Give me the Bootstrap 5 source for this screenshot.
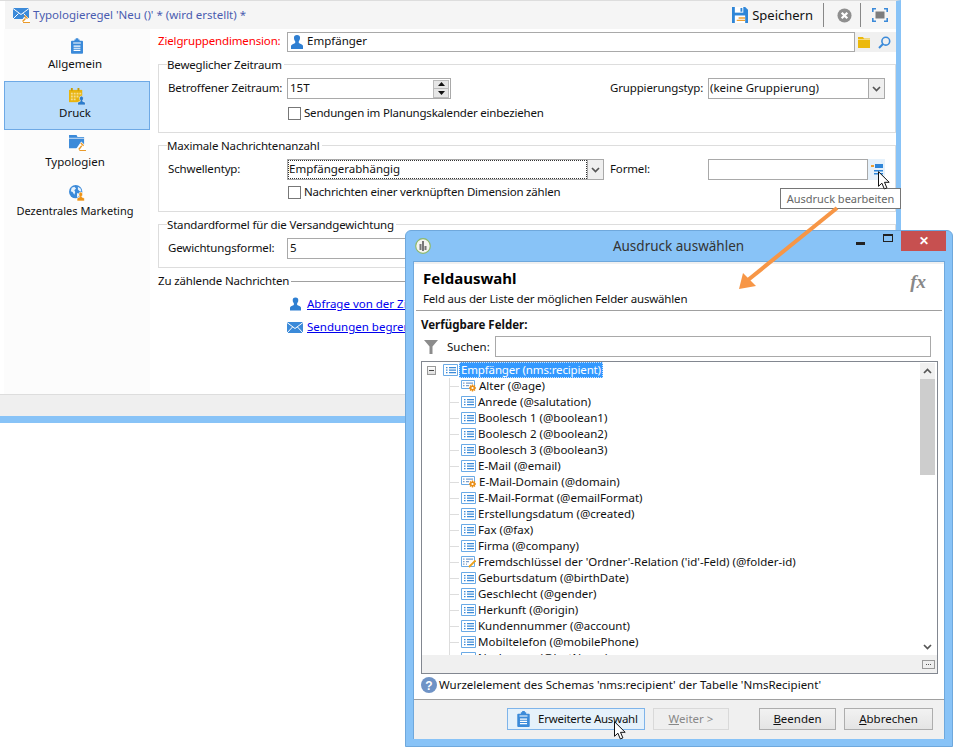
<!DOCTYPE html>
<html lang="de">
<head>
<meta charset="utf-8">
<title>Typologieregel</title>
<link href="https://cdn.jsdelivr.net/npm/bootstrap@5.3.0/dist/css/bootstrap.min.css" rel="stylesheet">
<style>
html,body{margin:0;background:#fff;overflow:hidden}
body{font-family:"Noto Sans","Liberation Sans",sans-serif;font-size:11.5px;line-height:16px;color:#111}
.desk{position:relative;width:969px;height:747px;overflow:hidden}
.win-main{position:absolute;left:0;top:0;width:901px;height:423px;border-top:1px solid #ddd;border-right:5px solid #88c3f7;border-bottom:7px solid #88c3f7;background:#fff}
.tool{height:28px;margin-left:5px;background:#f5f5f5;color:#4a5cb0;font-size:11.5px}
.tool-ttl{margin-left:3px}
.save-txt{color:#111;font-size:13px;margin-left:4px}
.vsep{width:1px;height:24px;background:#888}
.vs1{margin:0 13px 0 10px}
.vs2{margin:0 11px 0 8px}
.wbody{height:365px;margin-left:4px}
.side{width:146px;background:#fcfcfc}
.side-item.nav-link{color:#111;text-align:center;border:1px solid transparent;font-size:11.5px}
.side-item svg{display:block;margin:0 auto}
.side-item span{display:block;margin-right:4px;white-space:nowrap}
.s1.nav-link{height:52px;padding:8px 0 0}
.s1 svg{margin-bottom:2px}
.sel.nav-link{height:49px;padding:6px 0 0;background:#b9dcfb;border-color:#6ea9e5}
.s3.nav-link{height:49px;padding:4px 0 0}
.s3 svg{margin-bottom:3px}
.s4.nav-link{height:50px;padding:5px 0 0}
.s4 svg{margin-bottom:2px}
.s4 span{font-size:11px}
.content{width:746px;padding-left:8px}
.r-top{margin-top:3px;height:20px}
.lbl-red{color:#f00;width:129px;white-space:nowrap;padding-bottom:2px;letter-spacing:-.15px}
.wf-field{border:1px solid #a9a9a9;background:#fff;height:21px}
.wf-input.form-control{border:0;border-radius:0;padding:0 2px 2px;font-size:11.5px;line-height:17px;height:19px;min-height:0;color:#111;background:#fff;box-shadow:none}
.topfield{width:568px;padding-left:3px;height:20px}
.topfield span{padding-bottom:2px}
.tools-end{width:41px;height:20px;background:#f0f0f0;gap:8px;padding-left:3px}
.grp{border:1px solid #ddd;margin:5px 0 0;padding:0 0 12px 9px;width:738px;min-width:0}
.grp legend{float:none;width:auto;font-size:11.5px;line-height:15px;margin:0 0 0 -1px;padding:0 2px 0 0;color:#111;letter-spacing:-.17px}
.grp-row{margin-top:6px}
.glbl,.glbl2{flex:none;white-space:nowrap;padding-bottom:2px;letter-spacing:-.15px}
.glbl{width:119px}
.glbl2{width:98px}
.wf-combo{height:21px;border:1px solid #a9a9a9;background:#fff;padding-left:1px;white-space:nowrap}
.combo-txt{padding-bottom:2px}
.combo-btn{width:16px;height:19px;background:#efefef;border-left:1px solid #a9a9a9;margin-left:auto;flex:none}
.focusy{outline:1px dotted #333;outline-offset:-1px;width:299px;height:19px;padding-left:1px;line-height:17px}
.spin{width:16px;height:18px;margin:0 1px 0 auto;background:#e6e6e6;border:1px solid #bbb;font-size:0;flex:none}
.spin-a{height:8px;border-bottom:1px solid #bbb}
.spin-b{height:8px}
.chk-row{padding-left:119px;height:14px;letter-spacing:-.2px}
.chk-a{margin-top:7px}
.chk-b{margin-top:5px}
.wf-chk.form-check-input{width:13px;height:13px;margin:0 3px 0 1px;border:1px solid #777;border-radius:0;box-shadow:none;flex:none}
.septtl{margin-top:5px;height:16px;white-space:nowrap;letter-spacing:-.15px}
.sepline{height:1px;background:#a0a0a0;flex:1 0 auto;margin-left:2px;margin-right:10px}
.lnk{margin-top:7px;height:16px;padding-left:129px}
.lnk a{color:#00e;margin-left:4px;white-space:nowrap}
.lnk .ic{width:16px;display:flex;justify-content:center}
.status{height:22px;background:#efefef;border-top:1px solid #ddd}
.formel-btn{width:17px;height:21px;background:#e5f1fb}
.tip{position:absolute;left:780px;top:188px;width:121px;height:21px;background:#fff;border:1px solid #767676;color:#666;font-size:11px;line-height:19px;text-align:center;z-index:3}
.dlg{position:absolute;left:405px;top:230px;width:548px;height:517px;background:#88c3f7;border:1px solid #6fa8dc;border-radius:6px 6px 0 0;z-index:2;display:flex;flex-direction:column}
.dlg-title{height:30px;color:#333;font-size:13.5px;flex:none}
.dlg-ttxt{flex:1;text-align:center;padding-left:70px}
.dlg-app{margin-left:9px}
.wbtns{margin-right:6px;height:20px;align-self:flex-start}
.w-min{width:9px;height:3px;background:#222;margin-top:5px;align-self:center}
.w-max{width:10px;height:8px;border:1px solid #222;border-top-width:2px;margin-left:18px;margin-top:-6px}
.w-close.btn-close{width:45px;height:20px;padding:0;margin-left:8px;background:#c75050;opacity:1;border-radius:0;color:#fff;font-size:12px;font-weight:700;display:flex;align-items:center;justify-content:center;--bs-btn-close-bg:none}
.dlg-in{flex:1;margin:0 7px 7px 7px;background:#fff;border:1px solid #6fa8dc;display:flex;flex-direction:column;min-height:0}
.dlg-h{height:48px;border-top:2px solid #f0f0f0;padding:4px 0 0 9px;flex:none}
.dlg-h .t1{font-weight:700;font-size:15px;line-height:20px;color:#000;margin:0}
.dlg-h .t2{line-height:16px;margin-top:3px;letter-spacing:-.18px}
.fx{font-family:"Liberation Serif",serif;font-style:italic;font-weight:700;font-size:19px;color:#888}
.fxw{margin:6px 18px 0 auto}
.rule{height:1px;background:#a0a0a0;margin:0 2px;flex:none}
.avail{font-weight:700;margin:6px 0 0 7px;height:16px;flex:none}
.srch{margin:3px 0 0 10px;height:21px;flex:none}
.srch-l{width:57px;flex:none;padding-left:9px}
.srch-in{width:436px;border-color:#a9a9a9}
.tree{margin:4px 7px 0 7px;width:517px;height:313px;border:1px solid #828790;flex:none;display:flex;flex-direction:column}
.tree-main{height:293px}
.tree-list{flex:1;overflow:hidden;position:relative}
.tree-vl{position:absolute;left:27px;top:16px;bottom:0;width:1px;background:#ddd}
.trow{height:16px;padding-left:56px;position:relative;white-space:nowrap}
.trow::before{content:"";position:absolute;left:27px;top:8px;width:10px;height:1px;background:#ddd}
.trow svg{margin-right:2px;flex:none;margin-left:-17px}
.troot{padding-left:5px}
.troot::before{display:none}
.troot svg{margin:0 1px 0 0}
.exp{width:9px;height:9px;border:1px solid #999;background:linear-gradient(#fff,#ddd);margin-right:7px;position:relative;flex:none}
.exp::after{content:"";position:absolute;left:1px;top:3px;width:5px;height:1px;background:#444}
.tsel{background:#3399ff;color:#fff;outline:1px dotted #cfe6ff;outline-offset:-1px;padding:0 2px;line-height:16px;letter-spacing:-.15px}
.vbar{width:15px;margin-right:2px;margin-top:1px;flex:none;background:#fff}
.vb-btn{height:16px;background:#f0f0f0}
.vb-th{height:96px;background:#cdcdcd}
.vb-tr{flex:1}
.hband{flex:1;background:#f0f0f0}
.grip{width:13px;height:9px;border:1px solid #999;background:#eee;margin-right:2px;font-size:0;gap:1px}
.grip i{width:1px;height:1px;background:#555;display:block}
.hint{margin:2px 0 0 7px;height:18px;flex:none;line-height:18px}
.hint svg{margin-right:2px;flex:none}
.foot{height:40px;border-top:1px solid #a0a0a0;margin-top:5px;background:#f0f0f0;padding:8px 0 0 93px;flex:none;gap:8px}
.xb.btn{height:22px;border-radius:0;font-size:11.5px;line-height:16px;padding:0;border:1px solid #adadad;background:linear-gradient(#f2f2f2,#e4e4e4);color:#111;--bs-btn-disabled-opacity:1}
.xb-1.btn{width:138px;background:#e5f1fb;border-color:#7eb4ea;padding-left:9px;letter-spacing:-.25px}
.xb-2.btn{width:76px;background:#efefef;border-color:#d9d9d9;color:#888}
.xb-3.btn{width:77px;margin-left:22px}
.xb-4.btn{width:89px}
.xb-1 svg{margin-right:8px}
.over{position:absolute;pointer-events:none;z-index:4}
.arrow{left:730px;top:205px}
.cur1{left:878px;top:171px;z-index:5}
.cur2{left:614px;top:721px;z-index:5}
</style>
</head>
<body>
<svg width="0" height="0" class="position-absolute">
<defs>
<symbol id="i-clip" viewBox="0 0 14 18"><path fill="#3b8ad9" d="M1 3h3V1.500h1.500V0h3v1.500H10V3h3q1 0 1 1v13q0 1-1 1H1q-1 0-1-1V4q0-1 1-1z"/><path fill="#fff" d="M2.500 5h9v1.200h-9zM3 8.500h8v1.300H3zM3 11h8v1.300H3zM3 13.500h8v1.300H3z"/></symbol>
<symbol id="i-cal" viewBox="0 0 18 18"><path fill="#e9b40d" d="M0 2h14v13H0z"/><path fill="#c99a05" d="M2 0h2v3H2zM9 0h2v3H9z"/><path fill="#fff" opacity=".55" d="M2 5h2v2H2zM5 5h2v2H5zM8 5h2v2H8zM11 5h2v2h-2zM2 8h2v2H2zM5 8h2v2H5zM8 8h2v2H8zM2 11h2v2H2zM5 11h2v2H5z"/><path fill="#2b7ccd" stroke="#fff" stroke-width=".6" d="M13 8.500a2.300 2.300 0 0 1 2.300 2.600c0 1-.6 1.700-.9 2.200v.7l3 1.300V18H9v-2.700l3-1.300v-.7c-.3-.5-.9-1.200-.9-2.200A2.300 2.300 0 0 1 13 8.500z"/></symbol>
<symbol id="i-fold" viewBox="0 0 18 17"><path fill="#3b8ad9" d="M0 0h8l1 2h7v12H0z"/><path fill="#fff" d="M0 3h16v.8H0z"/><path fill="#fff" d="M8 14l5-7 5 5v5H8z"/><path fill="#ea9a2a" d="M13 8l3 3-1 1-3-3zM13 11l1 1-3 4-1.200-1zM11 16h7v1h-7z"/></symbol>
<symbol id="i-globe" viewBox="0 0 18 18"><circle cx="7.500" cy="7.500" r="7.500" fill="#3b8ad9"/><path fill="#e6f1fb" d="M3 3l3-1 2 2-2 2 1 2-1 3-2-3-2-1zM10 2l3 2 1 3-2 0-2-2zM9 9l3 1-1 3-2 1z"/><path fill="#ee9417" stroke="#fff" stroke-width=".7" d="M13 8a2.300 2.300 0 0 1 2.300 2.600c0 1-.6 1.700-.9 2.200v.7l3 1.300V18H9v-3.200l3-1.300v-.7c-.3-.5-.9-1.200-.9-2.200A2.300 2.300 0 0 1 13 8z"/></symbol>
<symbol id="i-mailh" viewBox="0 0 17 16"><path fill="#3b8ad9" d="M0 1h16v11H0z"/><path fill="none" stroke="#fff" stroke-width="1" d="M0 1.500l8 6 8-6M0 12l5.500-5.500M16 12l-5.500-5.500"/><path fill="#fff" d="M7 16l4-6 6 2v4z"/><path fill="#ea9a2a" d="M12 8l3 3-1 1-3-3zM12 11l1 1-3 3-1-1zM10 15h7v1h-7z"/></symbol>
<symbol id="i-person" viewBox="0 0 12 14"><path fill="#2e7fd2" d="M6 0a3 3 0 0 1 3 3.300c0 1.400-.7 2.300-1.200 3V8l3 1.400q1.200.6 1.200 1.600v3H0v-3q0-1 1.200-1.600L4.200 8V6.300C3.700 5.600 3 4.700 3 3.300A3 3 0 0 1 6 0z"/></symbol>
<symbol id="i-mail" viewBox="0 0 16 11"><path fill="#3b8ad9" d="M0 0h16v11H0z"/><path fill="none" stroke="#fff" stroke-width="1" d="M0 .5l8 6 8-6M0 11l5.500-6M16 11l-5.500-6"/></symbol>
<symbol id="i-save" viewBox="0 0 17 17"><path fill="#2f86d8" d="M0 0h14l3 3v14H0z"/><path fill="#fff" d="M3 0h9v6H3z"/><path fill="#2f86d8" d="M9 1h2v4H9z"/><path fill="#fff" d="M3 9h11v8H3z"/><path fill="#f0a030" d="M7 11h7v1.500H7zM5 13.500h9V15H5z"/></symbol>
<symbol id="i-x" viewBox="0 0 16 16"><circle cx="8" cy="8" r="7.500" fill="#8f8f8f"/><path stroke="#fff" stroke-width="2.400" d="M5 5l6 6M11 5l-6 6"/></symbol>
<symbol id="i-full" viewBox="0 0 16 14"><g fill="none" stroke="#3b8ad9" stroke-width="1.600"><path d="M.8 4V.8H4M12 .8h3.200V4M.8 10v3.200H4M12 13.200h3.200V10"/></g><path fill="#7d7d7d" d="M3.500 3.500h9v7h-9z"/></symbol>
<symbol id="i-yf" viewBox="0 0 12 11"><path fill="#ecb90c" d="M0 0h5l1 1.500h6V11H0z"/><path fill="#fff" d="M0 2.200h12v.5H0z"/></symbol>
<symbol id="i-mag" viewBox="0 0 13 13"><circle cx="7.800" cy="5.200" r="3.900" fill="none" stroke="#3b8ad9" stroke-width="1.600"/><path stroke="#3b8ad9" stroke-width="2" d="M5 8L1 12"/></symbol>
<symbol id="i-fexp" viewBox="0 0 14 13"><path fill="#f0a030" d="M1 2h3v2H1z"/><path fill="#2f86d8" d="M5 1h8v4H5zM4 7h9v1.500H4zM4 10h9v1.500H4z"/></symbol>
<symbol id="i-f" viewBox="0 0 15 12"><path fill="#fff" stroke="#6aaae6" d="M.5.500h14v11H.5z"/><path fill="#3a8ad8" d="M3 3h1.500v1.300H3zM6 3h7v1.300H6zM3 5.500h1.500v1.300H3zM6 5.500h7v1.300H6zM3 8h1.500v1.300H3zM6 8h7v1.300H6z"/></symbol>
<symbol id="i-fg" viewBox="0 0 16 12"><path fill="#fff" stroke="#6aaae6" d="M.5.500h13v8h-13z"/><path fill="#7a9ecb" d="M2 2.500h1.500v1.300H2zM5 2.500h7v1.300H5zM2 5h1.500v1.300H2zM5 5h3v1.300H5z"/><path stroke="#ea8f17" stroke-width="1.400" d="M11.500 4.500v7M8 8h7M9 5.500l5 5M14 5.500l-5 5"/><circle cx="11.500" cy="8" r="2.500" fill="#ea8f17"/><circle cx="11.500" cy="8" r="1.100" fill="#fff"/></symbol>
<symbol id="i-fp" viewBox="0 0 15 12"><path fill="#fff" stroke="#6aaae6" d="M.5.500h13v10h-13z"/><path fill="#7a9ecb" d="M2 2.500h1.500v1.300H2zM5 2.500h7v1.300H5zM2 5h1.500v1.300H2zM5 5h3v1.300H5zM2 7.500h1.500v1.300H2zM5 7.500h1v1.300H5z"/><path stroke="#e9a11f" stroke-width="1.800" d="M14.500 4.500L8 11"/></symbol>
<symbol id="i-q" viewBox="0 0 16 16"><circle cx="8" cy="8" r="8" fill="#6f93c6"/><text x="8" y="12.500" text-anchor="middle" font-family="Liberation Sans" font-size="12" font-weight="700" fill="#fff">?</text></symbol>
<symbol id="i-filter" viewBox="0 0 14 14"><path fill="#8c8c8c" d="M0 0h14L8.500 6.500V14h-3V6.500z"/></symbol>
<symbol id="i-cursor" viewBox="0 0 12 19"><path fill="#fff" stroke="#111" d="M.5.700v14.600l3.400-3.100 2.400 5.700 2.600-1-2.400-5.600h4.700z"/></symbol>
<symbol id="i-app" viewBox="0 0 16 16"><circle cx="8" cy="8" r="7.300" fill="#f4f4f0" stroke="#8db86a" stroke-width="1.200"/><path fill="#777" d="M7 3h2v10H7zM4.500 6h2v6h-2zM9.500 8h2v4h-2z"/></symbol>
</defs>
</svg>

<div class="desk">
  <div class="win-main">
    <div class="tool d-flex align-items-center">
      <svg class="ms-2" width="17" height="16"><use href="#i-mailh"/></svg>
      <span class="tool-ttl">Typologieregel 'Neu ()' * (wird erstellt) *</span>
      <div class="d-flex align-items-center ms-auto">
        <svg width="16" height="16"><use href="#i-save"/></svg>
        <span class="save-txt">Speichern</span>
        <span class="vsep vs1"></span>
        <svg width="15" height="15"><use href="#i-x"/></svg>
        <span class="vsep vs2"></span>
        <svg class="me-2" width="16" height="14"><use href="#i-full"/></svg>
      </div>
    </div>
    <div class="wbody d-flex">
      <nav class="side nav flex-column flex-nowrap">
        <a class="side-item s1 nav-link" href="#"><svg width="12" height="16"><use href="#i-clip"/></svg><span>Allgemein</span></a>
        <a class="side-item sel nav-link" href="#"><svg width="17" height="17"><use href="#i-cal"/></svg><span>Druck</span></a>
        <a class="side-item s3 nav-link" href="#"><svg width="17" height="16"><use href="#i-fold"/></svg><span>Typologien</span></a>
        <a class="side-item s4 nav-link" href="#"><svg width="16" height="16"><use href="#i-globe"/></svg><span>Dezentrales Marketing</span></a>
      </nav>
      <div class="content">
        <div class="r-top d-flex align-items-center">
          <span class="lbl-red">Zielgruppendimension:</span>
          <div class="wf-field topfield d-flex align-items-center">
            <svg width="12" height="14"><use href="#i-person"/></svg>
            <span class="ms-1">Empfänger</span>
          </div>
          <div class="tools-end d-flex align-items-center">
            <svg width="12" height="11"><use href="#i-yf"/></svg>
            <svg width="13" height="13"><use href="#i-mag"/></svg>
          </div>
        </div>

        <fieldset class="grp">
          <legend>Beweglicher Zeitraum</legend>
          <div class="grp-row d-flex align-items-center">
            <span class="glbl">Betroffener Zeitraum:</span>
            <div class="wf-field d-flex align-items-center" style="width:164px">
              <input class="form-control wf-input" value="15T" aria-label="Zeitraum">
              <div class="spin d-flex flex-column">
                <div class="spin-a d-flex align-items-center justify-content-center"><svg width="7" height="4"><path d="M3.500 0L7 4H0z" fill="#111"/></svg></div>
                <div class="spin-b d-flex align-items-center justify-content-center"><svg width="7" height="4"><path d="M3.500 4L7 0H0z" fill="#111"/></svg></div>
              </div>
            </div>
            <span class="glbl2" style="margin-left:159px">Gruppierungstyp:</span>
            <div class="wf-combo d-flex align-items-center" style="width:177px">
              <span class="combo-txt">(keine Gruppierung)</span>
              <span class="combo-btn d-flex align-items-center justify-content-center"><svg width="9" height="6"><path d="M1 1l3.500 3.500L8 1" fill="none" stroke="#555" stroke-width="1.700"/></svg></span>
            </div>
          </div>
          <div class="chk-row chk-a d-flex align-items-center">
            <input class="form-check-input wf-chk" type="checkbox" aria-label="Sendungen">
            <span>Sendungen im Planungskalender einbeziehen</span>
          </div>
        </fieldset>

        <fieldset class="grp">
          <legend>Maximale Nachrichtenanzahl</legend>
          <div class="grp-row d-flex align-items-center">
            <span class="glbl">Schwellentyp:</span>
            <div class="wf-combo d-flex align-items-center p-0" style="width:317px">
              <span class="focusy">Empfängerabhängig</span>
              <span class="combo-btn d-flex align-items-center justify-content-center"><svg width="9" height="6"><path d="M1 1l3.500 3.500L8 1" fill="none" stroke="#555" stroke-width="1.700"/></svg></span>
            </div>
            <span class="glbl2" style="margin-left:6px">Formel:</span>
            <div class="wf-field" style="width:160px"></div>
            <div class="formel-btn d-flex align-items-center justify-content-center"><svg width="14" height="13"><use href="#i-fexp"/></svg></div>
          </div>
          <div class="chk-row chk-b d-flex align-items-center">
            <input class="form-check-input wf-chk" type="checkbox" aria-label="Nachrichten">
            <span>Nachrichten einer verknüpften Dimension zählen</span>
          </div>
        </fieldset>

        <fieldset class="grp pb-2">
          <legend>Standardformel für die Versandgewichtung</legend>
          <div class="grp-row d-flex align-items-center">
            <span class="glbl">Gewichtungsformel:</span>
            <div class="wf-field d-flex align-items-center" style="width:300px">
              <input class="form-control wf-input" value="5" aria-label="Gewichtung">
            </div>
          </div>
        </fieldset>

        <div class="septtl d-flex align-items-center"><span>Zu zählende Nachrichten</span><span class="sepline"></span></div>
        <div class="lnk d-flex align-items-center"><span class="ic"><svg width="11" height="14"><use href="#i-person"/></svg></span><a href="#">Abfrage von der Zielgruppe</a></div>
        <div class="lnk d-flex align-items-center"><span class="ic"><svg width="16" height="11"><use href="#i-mail"/></svg></span><a href="#">Sendungen begrenzen</a></div>
      </div>
    </div>
    <div class="status"></div>
  </div>

  <div class="tip">Ausdruck bearbeiten</div>

  <div class="dlg">
    <div class="dlg-title d-flex align-items-center">
      <svg class="dlg-app" width="16" height="16"><use href="#i-app"/></svg>
      <span class="dlg-ttxt">Ausdruck auswählen</span>
      <div class="wbtns d-flex align-items-center">
        <span class="w-min"></span>
        <span class="w-max"></span>
        <button type="button" class="w-close btn-close" aria-label="Schließen">✕</button>
      </div>
    </div>
    <div class="dlg-in">
      <div class="dlg-h d-flex">
        <div>
          <p class="t1">Feldauswahl</p>
          <p class="t2 mb-0">Feld aus der Liste der möglichen Felder auswählen</p>
        </div>
        <div class="fxw fx">fx</div>
      </div>
      <div class="rule"></div>
      <div class="avail">Verfügbare Felder:</div>
      <div class="srch d-flex align-items-center">
        <svg width="14" height="14"><use href="#i-filter"/></svg>
        <span class="srch-l">Suchen:</span>
        <div class="wf-field srch-in"></div>
      </div>
      <div class="tree">
        <div class="tree-main d-flex flex-grow-0">
          <div class="tree-list">
            <div class="tree-vl"></div>
            <div class="trow troot d-flex align-items-center"><span class="exp"></span><svg width="15" height="12"><use href="#i-f"/></svg><span class="tsel">Empfänger (nms:recipient)</span></div>
            <div class="trow d-flex align-items-center"><svg width="16" height="12"><use href="#i-fg"/></svg>Alter (@age)</div>
            <div class="trow d-flex align-items-center"><svg width="15" height="12"><use href="#i-f"/></svg>Anrede (@salutation)</div>
            <div class="trow d-flex align-items-center"><svg width="15" height="12"><use href="#i-f"/></svg>Boolesch 1 (@boolean1)</div>
            <div class="trow d-flex align-items-center"><svg width="15" height="12"><use href="#i-f"/></svg>Boolesch 2 (@boolean2)</div>
            <div class="trow d-flex align-items-center"><svg width="15" height="12"><use href="#i-f"/></svg>Boolesch 3 (@boolean3)</div>
            <div class="trow d-flex align-items-center"><svg width="15" height="12"><use href="#i-f"/></svg>E-Mail (@email)</div>
            <div class="trow d-flex align-items-center"><svg width="16" height="12"><use href="#i-fg"/></svg>E-Mail-Domain (@domain)</div>
            <div class="trow d-flex align-items-center"><svg width="15" height="12"><use href="#i-f"/></svg>E-Mail-Format (@emailFormat)</div>
            <div class="trow d-flex align-items-center"><svg width="15" height="12"><use href="#i-f"/></svg>Erstellungsdatum (@created)</div>
            <div class="trow d-flex align-items-center"><svg width="15" height="12"><use href="#i-f"/></svg>Fax (@fax)</div>
            <div class="trow d-flex align-items-center"><svg width="15" height="12"><use href="#i-f"/></svg>Firma (@company)</div>
            <div class="trow d-flex align-items-center"><svg width="15" height="12"><use href="#i-fp"/></svg>Fremdschlüssel der 'Ordner'-Relation ('id'-Feld) (@folder-id)</div>
            <div class="trow d-flex align-items-center"><svg width="15" height="12"><use href="#i-f"/></svg>Geburtsdatum (@birthDate)</div>
            <div class="trow d-flex align-items-center"><svg width="15" height="12"><use href="#i-f"/></svg>Geschlecht (@gender)</div>
            <div class="trow d-flex align-items-center"><svg width="15" height="12"><use href="#i-f"/></svg>Herkunft (@origin)</div>
            <div class="trow d-flex align-items-center"><svg width="15" height="12"><use href="#i-f"/></svg>Kundennummer (@account)</div>
            <div class="trow d-flex align-items-center"><svg width="15" height="12"><use href="#i-f"/></svg>Mobiltelefon (@mobilePhone)</div>
            <div class="trow d-flex align-items-center"><svg width="15" height="12"><use href="#i-f"/></svg>Nachname (@lastName)</div>
          </div>
          <div class="vbar d-flex flex-column">
            <div class="vb-btn d-flex align-items-center justify-content-center"><svg width="9" height="6"><path d="M1 5l3.500-3.500L8 5" fill="none" stroke="#555" stroke-width="1.700"/></svg></div>
            <div class="vb-th"></div>
            <div class="vb-tr"></div>
            <div class="vb-btn d-flex align-items-center justify-content-center bg-white"><svg width="9" height="6"><path d="M1 1l3.500 3.500L8 1" fill="none" stroke="#555" stroke-width="1.700"/></svg></div>
          </div>
        </div>
        <div class="hband d-flex align-items-center justify-content-end">
          <div class="grip d-flex align-items-center justify-content-center"><i></i><i></i><i></i></div>
        </div>
      </div>
      <div class="hint d-flex align-items-center"><svg width="16" height="16"><use href="#i-q"/></svg>Wurzelelement des Schemas 'nms:recipient' der Tabelle 'NmsRecipient'</div>
      <div class="foot d-flex align-items-start">
        <button type="button" class="btn xb xb-1 d-flex align-items-center"><svg width="13" height="16"><use href="#i-clip"/></svg>Erweiterte Auswahl</button>
        <button type="button" class="btn xb xb-2" disabled><u>W</u>eiter &gt;</button>
        <button type="button" class="btn xb xb-3"><u>B</u>eenden</button>
        <button type="button" class="btn xb xb-4"><u>A</u>bbrechen</button>
      </div>
    </div>
  </div>

  <svg class="over arrow" width="115" height="95" viewBox="730 205 115 95">
    <path d="M837 208L748 280" stroke="#f79646" stroke-width="4" fill="none"/>
    <path d="M739 289L743 273L756 286z" fill="#f79646"/>
  </svg>
  <svg class="over cur1" width="12" height="19"><use href="#i-cursor"/></svg>
  <svg class="over cur2" width="12" height="19"><use href="#i-cursor"/></svg>
</div>
<script src="https://cdn.jsdelivr.net/npm/bootstrap@5.3.0/dist/js/bootstrap.bundle.min.js"></script>
</body>
</html>
